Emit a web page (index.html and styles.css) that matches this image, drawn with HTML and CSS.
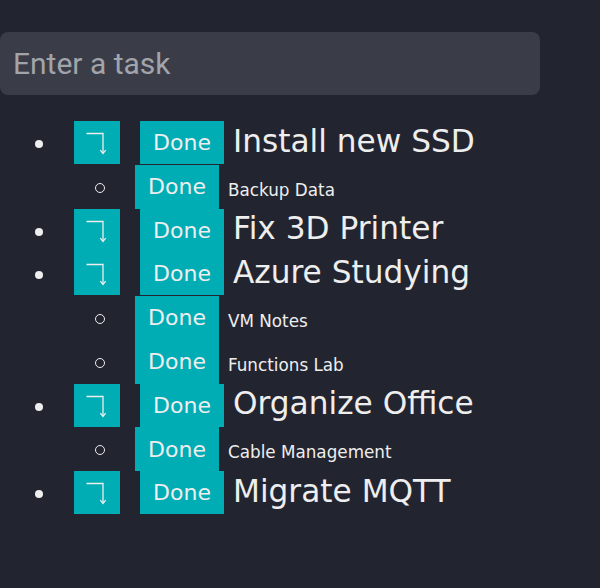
FILE: index.html
```html
<!DOCTYPE html>
<html lang="en">
<head>
<meta charset="utf-8">
<title>Tasks</title>
<link rel="stylesheet" href="styles.css">
</head>
<body>
<main class="app">
  <input class="task-input" type="text" placeholder="Enter a task">
  <ul class="task-list">
    <li class="row main">
      <span class="dot"></span>
      <button class="indent" aria-label="Indent"><svg width="46" height="43" viewBox="0 0 46 43"><path d="M12.5 12.5 H29 V32" fill="none" stroke="#eeeeee" stroke-width="1.3"/><path d="M26.3 29.2 L29 32.4 L31.7 29.2" fill="none" stroke="#eeeeee" stroke-width="1.3"/></svg></button>
      <button class="done">Done</button>
      <span class="title">Install new SSD</span>
    </li>
    <li class="row sub">
      <span class="ring"></span>
      <button class="done">Done</button>
      <span class="subtitle">Backup Data</span>
    </li>
    <li class="row main">
      <span class="dot"></span>
      <button class="indent" aria-label="Indent"><svg width="46" height="43" viewBox="0 0 46 43"><path d="M12.5 12.5 H29 V32" fill="none" stroke="#eeeeee" stroke-width="1.3"/><path d="M26.3 29.2 L29 32.4 L31.7 29.2" fill="none" stroke="#eeeeee" stroke-width="1.3"/></svg></button>
      <button class="done">Done</button>
      <span class="title">Fix 3D Printer</span>
    </li>
    <li class="row main">
      <span class="dot"></span>
      <button class="indent" aria-label="Indent"><svg width="46" height="43" viewBox="0 0 46 43"><path d="M12.5 12.5 H29 V32" fill="none" stroke="#eeeeee" stroke-width="1.3"/><path d="M26.3 29.2 L29 32.4 L31.7 29.2" fill="none" stroke="#eeeeee" stroke-width="1.3"/></svg></button>
      <button class="done">Done</button>
      <span class="title">Azure Studying</span>
    </li>
    <li class="row sub">
      <span class="ring"></span>
      <button class="done">Done</button>
      <span class="subtitle">VM Notes</span>
    </li>
    <li class="row sub">
      <span class="ring"></span>
      <button class="done">Done</button>
      <span class="subtitle">Functions Lab</span>
    </li>
    <li class="row main">
      <span class="dot"></span>
      <button class="indent" aria-label="Indent"><svg width="46" height="43" viewBox="0 0 46 43"><path d="M12.5 12.5 H29 V32" fill="none" stroke="#eeeeee" stroke-width="1.3"/><path d="M26.3 29.2 L29 32.4 L31.7 29.2" fill="none" stroke="#eeeeee" stroke-width="1.3"/></svg></button>
      <button class="done">Done</button>
      <span class="title">Organize Office</span>
    </li>
    <li class="row sub">
      <span class="ring"></span>
      <button class="done">Done</button>
      <span class="subtitle">Cable Management</span>
    </li>
    <li class="row main">
      <span class="dot"></span>
      <button class="indent" aria-label="Indent"><svg width="46" height="43" viewBox="0 0 46 43"><path d="M12.5 12.5 H29 V32" fill="none" stroke="#eeeeee" stroke-width="1.3"/><path d="M26.3 29.2 L29 32.4 L31.7 29.2" fill="none" stroke="#eeeeee" stroke-width="1.3"/></svg></button>
      <button class="done">Done</button>
      <span class="title">Migrate MQTT</span>
    </li>
  </ul>
</main>
</body>
</html>
```
FILE: styles.css
```css
html, body {
  margin: 0;
  padding: 0;
  background: #222530;
  height: 100%;
}

.app {
  padding-top: 32px;
  font-family: "DejaVu Sans", Verdana, sans-serif;
  color: #eeeeee;
}

.task-input {
  display: block;
  box-sizing: border-box;
  width: 540px;
  height: 63px;
  margin: 0;
  padding: 0 13px;
  border: none;
  border-radius: 8px;
  background: #3a3d47;
  color: #eeeeee;
  font-family: Roboto, "Liberation Sans", sans-serif;
  font-size: 30px;
  outline: none;
}

.task-input::placeholder {
  color: #a2a4ab;
}

.task-list {
  list-style: none;
  margin: 26px 0 0 0;
  padding: 0;
}

.row {
  display: flex;
  align-items: center;
}

.row.main {
  height: 43.5px;
}

.row.sub {
  height: 44px;
}

.dot {
  flex: none;
  width: 8px;
  height: 8px;
  border-radius: 50%;
  background: #eeeeee;
  margin: 3px 31px 0 35px;
}

.ring {
  flex: none;
  box-sizing: border-box;
  width: 10px;
  height: 10px;
  border-radius: 50%;
  border: 1.5px solid #eeeeee;
  margin: 2px 30px 0 95px;
}

button {
  border: none;
  margin: 0;
  padding: 0;
  background: #00adb5;
  color: #eeeeee;
  font-family: "DejaVu Sans", Verdana, sans-serif;
  cursor: pointer;
}

.indent {
  flex: none;
  width: 46px;
  height: 43px;
  margin-right: 20px;
  align-self: flex-start;
  display: flex;
}

.indent svg {
  display: block;
}

.done {
  flex: none;
  width: 84px;
  font-size: 22px;
}

.row.main .done {
  height: 43px;
  align-self: flex-start;
}

.row.sub .done {
  height: 44px;
}

.title {
  margin-left: 9px;
  font-size: 31.2px;
  line-height: 37px;
  margin-bottom: 3px;
  white-space: nowrap;
}

.subtitle {
  margin-left: 9px;
  font-size: 16.8px;
  line-height: 20px;
  margin-top: 6px;
  white-space: nowrap;
}
```
